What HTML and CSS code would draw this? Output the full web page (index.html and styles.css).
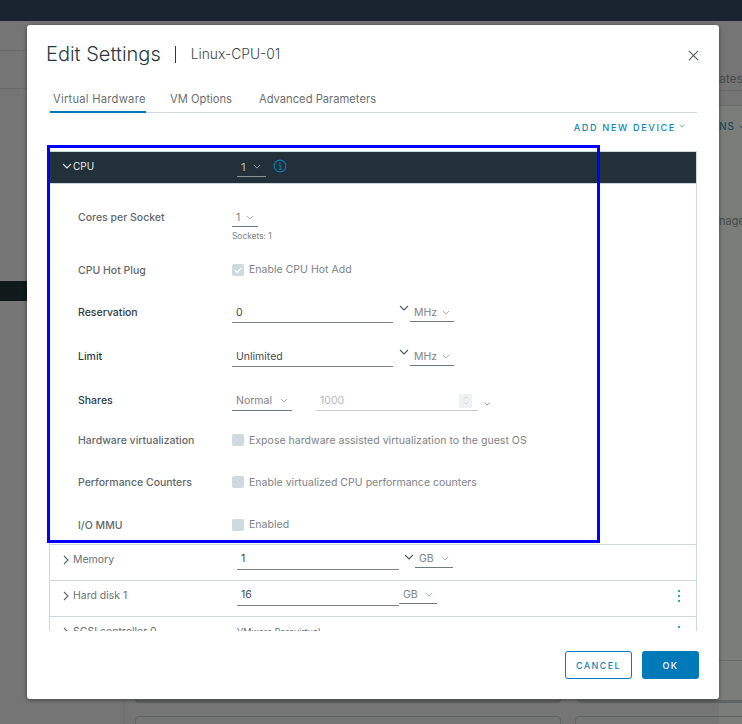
FILE: index.html
```html
<!DOCTYPE html>
<html lang="en">
<head>
<meta charset="utf-8">
<title>Edit Settings</title>
<link rel="stylesheet" href="styles.css">
</head>
<body>
<svg class="sprite" width="0" height="0" aria-hidden="true">
  <symbol id="chev" viewBox="0 0 10 6"><path d="M1 1l4 4 4-4" fill="none" stroke="currentColor" stroke-width="1.1"/></symbol>
  <symbol id="chevr" viewBox="0 0 6 10"><path d="M1 1l4 4-4 4" fill="none" stroke="currentColor" stroke-width="1.1"/></symbol>
</svg>

<div class="topbar"></div>
<div class="bg-content">
  <div class="bg-line bg-l1"></div>
  <div class="bg-line bg-l2"></div>
  <div class="bg-black"></div>
  <div class="bg-right"></div>
  <div class="bg-divider"></div>
  <div class="bg-line bg-r1"></div>
  <div class="bg-line bg-r2"></div>
  <div class="bg-line bg-r3"></div>
  <span class="bg-text bg-ates">ates</span>
  <span class="bg-text bg-ns">NS <svg class="ic-8"><use href="#chev"/></svg></span>
  <span class="bg-text bg-nager">nager</span>
  <div class="bg-card bg-c1"></div>
  <div class="bg-card bg-c2"></div>
  <div class="bg-card bg-c3"></div>
  <div class="bg-card bg-c4"></div>
</div>

<main class="modal">
  <header class="modal-head">
    <h1 class="title">Edit Settings</h1>
    <span class="title-sep"></span>
    <span class="subtitle">Linux-CPU-01</span>
    <svg class="close" viewBox="0 0 12 12"><path d="M1 1l10 10M11 1L1 11" stroke="#4a5a64" stroke-width="1.2" fill="none"/></svg>
  </header>

  <nav class="tabs">
    <a class="tab tab-active">Virtual Hardware</a>
    <a class="tab">VM Options</a>
    <a class="tab">Advanced Parameters</a>
  </nav>

  <div class="add-row">
    <span class="add-device">ADD NEW DEVICE</span>
    <svg class="ic-6 add-chev"><use href="#chev"/></svg>
  </div>

  <div class="hw-list">
    <div class="cpu-head">
      <div class="cpu-name"><svg class="ic-10"><use href="#chev"/></svg><span>CPU</span></div>
      <div class="cpu-select"><span>1</span><svg class="ic-8"><use href="#chev"/></svg></div>
      <svg class="info" viewBox="0 0 14 14">
        <circle cx="7" cy="7" r="5.9" fill="none" stroke="#0a7cb0" stroke-width="1.1"/>
        <path d="M5.8 6h1.5v4M5.6 10.2h3.2" fill="none" stroke="#0a7cb0" stroke-width="1"/>
        <circle cx="7" cy="4" r=".8" fill="#0a7cb0"/>
      </svg>
    </div>

    <div class="cpu-form">
      <div class="lbl lbl-top">Cores per Socket</div>
      <div class="val-top">
        <div class="sel sel-cores dim"><span>1</span><svg class="ic-8"><use href="#chev"/></svg></div>
        <div class="hint">Sockets: 1</div>
      </div>

      <div class="lbl">CPU Hot Plug</div>
      <label class="chk chk-up"><span class="box"><svg viewBox="0 0 12 12"><path d="M3 6.2l2.2 2.2L9.2 4" fill="none" stroke="#fff" stroke-width="1.2"/></svg></span><span class="chk-text">Enable CPU Hot Add</span></label>

      <div class="lbl lbl-strong">Reservation</div>
      <div class="val">
        <div class="input input-wide">0</div>
        <svg class="ic-10 combo-chev"><use href="#chev"/></svg>
        <div class="sel sel-unit dim"><span>MHz</span><svg class="ic-8"><use href="#chev"/></svg></div>
      </div>

      <div class="lbl lbl-strong">Limit</div>
      <div class="val">
        <div class="input input-wide">Unlimited</div>
        <svg class="ic-10 combo-chev"><use href="#chev"/></svg>
        <div class="sel sel-unit dim"><span>MHz</span><svg class="ic-8"><use href="#chev"/></svg></div>
      </div>

      <div class="lbl lbl-strong">Shares</div>
      <div class="val">
        <div class="sel sel-shares dim"><span>Normal</span><svg class="ic-8"><use href="#chev"/></svg></div>
        <div class="input-off"><span>1000</span><span class="spin"><svg class="ic-6 flip"><use href="#chev"/></svg><svg class="ic-6"><use href="#chev"/></svg></span></div>
        <svg class="ic-6 shares-chev"><use href="#chev"/></svg>
      </div>

      <div class="lbl">Hardware virtualization</div>
      <label class="chk"><span class="box"></span><span class="chk-text">Expose hardware assisted virtualization to the guest OS</span></label>

      <div class="lbl">Performance Counters</div>
      <label class="chk"><span class="box"></span><span class="chk-text">Enable virtualized CPU performance counters</span></label>

      <div class="lbl lbl-io">I/O MMU</div>
      <label class="chk"><span class="box box-down"></span><span class="chk-text">Enabled</span></label>
    </div>

    <div class="hw-row">
      <div class="hw-name"><svg class="ic-chevr"><use href="#chevr"/></svg>Memory</div>
      <div class="input input-row">1</div>
      <svg class="ic-10 row-chev"><use href="#chev"/></svg>
      <div class="sel sel-gb dim"><span>GB</span><svg class="ic-8"><use href="#chev"/></svg></div>
    </div>
    <div class="hw-row">
      <div class="hw-name"><svg class="ic-chevr"><use href="#chevr"/></svg>Hard disk 1</div>
      <div class="input input-row">16</div>
      <div class="sel sel-gb sel-gb-tight dim"><span>GB</span><svg class="ic-8"><use href="#chev"/></svg></div>
      <svg class="kebab" viewBox="0 0 4 14"><circle cx="2" cy="2" r="1.1"/><circle cx="2" cy="7" r="1.1"/><circle cx="2" cy="12" r="1.1"/></svg>
    </div>
    <div class="hw-row">
      <div class="hw-name"><svg class="ic-chevr"><use href="#chevr"/></svg>SCSI controller 0</div>
      <div class="scsi-val">VMware Paravirtual</div>
      <svg class="kebab" viewBox="0 0 4 14"><circle cx="2" cy="2" r="1.1"/><circle cx="2" cy="7" r="1.1"/><circle cx="2" cy="12" r="1.1"/></svg>
    </div>
  </div>

  <footer class="modal-foot">
    <button class="btn btn-outline">CANCEL</button>
    <button class="btn btn-solid">OK</button>
  </footer>
</main>

<div class="highlight"></div>
</body>
</html>
```

FILE: styles.css
```css
* { box-sizing: border-box; }
html, body { margin: 0; padding: 0; }
body {
  width: 742px;
  height: 724px;
  overflow: hidden;
  position: relative;
  background: #757575;
  font-family: "Inter", "Liberation Sans", sans-serif;
  font-size: 10.5px;
  color: #3f4a50;
}
.sprite { position: absolute; }

/* Dimmed page behind the dialog */
.topbar { height: 21px; background: #1a2430; }
.bg-content { position: absolute; inset: 21px 0 0 0; }
.bg-line { position: absolute; height: 1px; background: #686c6b; }
.bg-l1 { left: 0; width: 30px; top: 29px; }
.bg-l2 { left: 0; width: 30px; top: 67px; }
.bg-black { position: absolute; left: 0; width: 30px; top: 260px; height: 20px; background: #101a1a; }
.bg-right { position: absolute; left: 719px; right: 0; top: 84px; bottom: 0; background: #7a7d79; }
.bg-divider { position: absolute; left: 123px; width: 2px; top: 670px; bottom: 0; background: #6f7170; }
.bg-r1 { left: 715px; right: 0; top: 69px; }
.bg-r2 { left: 715px; right: 0; top: 84px; }
.bg-r3 { left: 715px; right: 0; top: 639px; }
.bg-text { position: absolute; font-size: 11px; color: #454b4d; white-space: nowrap; }
.bg-ates { left: 719px; top: 50px; font-size: 12px; }
.bg-ns { left: 719px; top: 99px; color: #1e4a5e; font-size: 10px; letter-spacing: 1px; font-weight: 500; }
.bg-nager { left: 719px; top: 193px; font-size: 11px; }
.bg-card { position: absolute; border: 1px solid #5f6564; border-radius: 4px; height: 30px; }
.bg-c1 { left: 135px; width: 426px; top: 652px; border-width: 0 1px 3px; height: 30px; }
.bg-c2 { left: 577px; right: -10px; top: 652px; border-width: 0 1px 3px; height: 30px; }
.bg-c3 { left: 135px; width: 426px; top: 695px; }
.bg-c4 { left: 575px; right: -10px; top: 695px; }

/* Dialog */
.modal {
  position: absolute;
  left: 27px;
  top: 25px;
  width: 692px;
  height: 674px;
  background: #fff;
  border-radius: 3px;
  box-shadow: 0 1px 4px rgba(0, 0, 0, .45);
  padding: 0 20px;
  display: flex;
  flex-direction: column;
}
.modal-head { height: 60px; padding-bottom: 2px; display: flex; align-items: center; }
.title { margin: 0 0 0 -1px; font-size: 20px; font-weight: 300; color: #2b3a42; }
.title-sep { width: 1px; height: 17px; background: #2b3a42; margin: 0 15px 0 14px; }
.subtitle { font-size: 13.8px; font-weight: 300; color: #3a474e; }
.close { width: 11px; height: 11px; margin-left: auto; margin-right: 0; margin-top: 3px; }

.tabs { height: 28px; margin: 0 2px; padding-left: 1px; display: flex; gap: 21px; border-bottom: 1px solid #ccd6dd; }
.tab { padding: 7px 3px 0; font-size: 11.2px; color: #6a6f72; height: 28px; white-space: nowrap; }
.tab-active { width: 96px; letter-spacing: .25px; border-bottom: 2px solid #0079b8; }

.add-row { height: 38px; padding: 8px 14px 0 0; display: flex; justify-content: flex-end; align-items: flex-start; color: #0f86b6; }
.add-device { font-size: 9.2px; font-weight: 500; letter-spacing: 1.6px; line-height: 14px; white-space: nowrap; }
.add-chev { margin: 3px 0 0 3px; }

.ic-10 { width: 10px; height: 6px; flex: none; }
.ic-8 { width: 8px; height: 5px; flex: none; }
.ic-6 { width: 6px; height: 4px; flex: none; display: block; }
.flip { transform: scaleY(-1); }

/* Hardware list */
.hw-list {
  margin-left: 2px;
  width: 648px;
  height: 480px;
  overflow: hidden;
  border-left: 1px solid #ccd6dd;
  border-right: 1px solid #ccd6dd;
  border-top: 1px solid #ccd6dd;
}
.cpu-head {
  height: 31px;
  background: #22303a;
  color: #e8eef1;
  display: flex;
  align-items: center;
  padding: 0 0 4px 12px;
}
.cpu-name { width: 175px; display: flex; align-items: center; gap: 1px; font-size: 10px; }
.cpu-select {
  width: 29px;
  height: 20px;
  padding-left: 4px;
  margin-top: 3px;
  border-bottom: 1px solid #8a9499;
  display: flex;
  align-items: center;
  gap: 8px;
  color: #b9c2c7;
  font-size: 11px;
}
.cpu-select svg { color: #9aa5ab; }
.info { width: 14px; height: 14px; margin-left: 7px; }

.cpu-form {
  border-bottom: 1px solid #ccd6dd;
  border-top: 1px solid #ccd6dd;
  padding: 16px 0 2px 28px;
  display: grid;
  grid-template-columns: 154px 1fr;
  grid-template-rows: 50px 40px 44px 44px 44px 36px 48px 36px;
  align-items: center;
  height: 362px;
}
.lbl { font-size: 10.5px; font-weight: 500; color: #62686b; white-space: nowrap; }
.lbl-strong { color: #2f3b42; }
.lbl-top { align-self: start; margin-top: 11px; }
.lbl-io { margin-top: 2px; }
.val-top { align-self: start; padding-top: 8px; }
.val { display: flex; align-items: center; }
.dim { color: #7d8286; }

.sel {
  display: flex;
  align-items: center;
  justify-content: space-between;
  border-bottom: 1px solid #6f7a80;
  font-size: 10.5px;
  height: 19px;
  padding: 0 4px;
}
.sel svg { color: #9aa2a7; }
.sel-cores { width: 26px; }
.hint { font-size: 8.4px; color: #7d8286; margin-top: 4px; }
.sel-unit { width: 44px; margin-top: 1px; }
.sel-shares { width: 60px; margin-top: 2px; }
.sel-gb { width: 38px; margin-left: 0; margin-top: -2px; }
.sel-gb-tight { margin-left: 0; }

.input {
  border-bottom: 1px solid #7d8589;
  height: 20px;
  font-size: 10.5px;
  padding: 3px 4px 0;
  color: #3f4a50;
}
.input-wide { width: 161px; margin-top: 2px; }
.combo-chev { margin: -8px 1px 0 6px; color: #4a5a64; }

.input-off {
  width: 162px;
  height: 19px;
  margin-left: 24px;
  margin-top: 2px;
  border-bottom: 1px solid #c8ccce;
  color: #b4b8ba;
  display: flex;
  align-items: center;
  justify-content: space-between;
  padding: 0 6px 0 4px;
  font-size: 10.5px;
}
.spin { width: 13px; height: 14px; background: #eef2f4; display: flex; flex-direction: column; align-items: center; justify-content: center; gap: 1px; color: #c4cacd; }
.shares-chev { margin-left: 6px; margin-top: 7px; color: #4f595f; }

.chk { display: flex; align-items: center; gap: 5px; font-size: 10.5px; letter-spacing: .03px; color: #7d8286; white-space: nowrap; }
.chk-up .chk-text { margin-top: -2px; }
.box { width: 12px; height: 12px; background: #cfdae0; border-radius: 2px; flex: none; display: block; }
.box-down { margin-top: 2px; }
.box svg { display: block; width: 12px; height: 12px; }

.hw-row {
  height: 36px;
  border-bottom: 1px solid #ccd6dd;
  display: flex;
  align-items: center;
  position: relative;
  padding: 0 0 6px 13px;
  color: #6a7074;
}
.hw-name { width: 174px; display: flex; align-items: center; gap: 4px; font-size: 10.5px; white-space: nowrap; }
.ic-chevr { width: 6px; height: 10px; color: #5c666c; flex: none; }
.input-row { width: 162px; padding-top: 2px; height: 20px; margin-top: 1px; }
.row-chev { margin: -6px 1px 0 5px; color: #4a5a64; }
.kebab { position: absolute; right: 15px; top: 8px; width: 4px; height: 14px; fill: #0f86b6; }
.scsi-val { font-size: 9px; color: #6a7074; }

.modal-foot { display: flex; justify-content: flex-end; gap: 10px; margin-top: 20px; }
.btn {
  height: 28px;
  border-radius: 3px;
  font-family: inherit;
  font-size: 9px;
  font-weight: 500;
  letter-spacing: 1.4px;
  padding: 0;
}
.btn-outline { width: 67px; background: #fff; border: 1px solid #0079b8; color: #0f86b6; }
.btn-solid { width: 57px; background: #0079b8; border: 0; color: #fff; }

/* Annotation frame over the CPU section */
.highlight {
  position: absolute;
  left: 47px;
  top: 145px;
  width: 553px;
  height: 398px;
  border: 3px solid #0000ff;
}
```
